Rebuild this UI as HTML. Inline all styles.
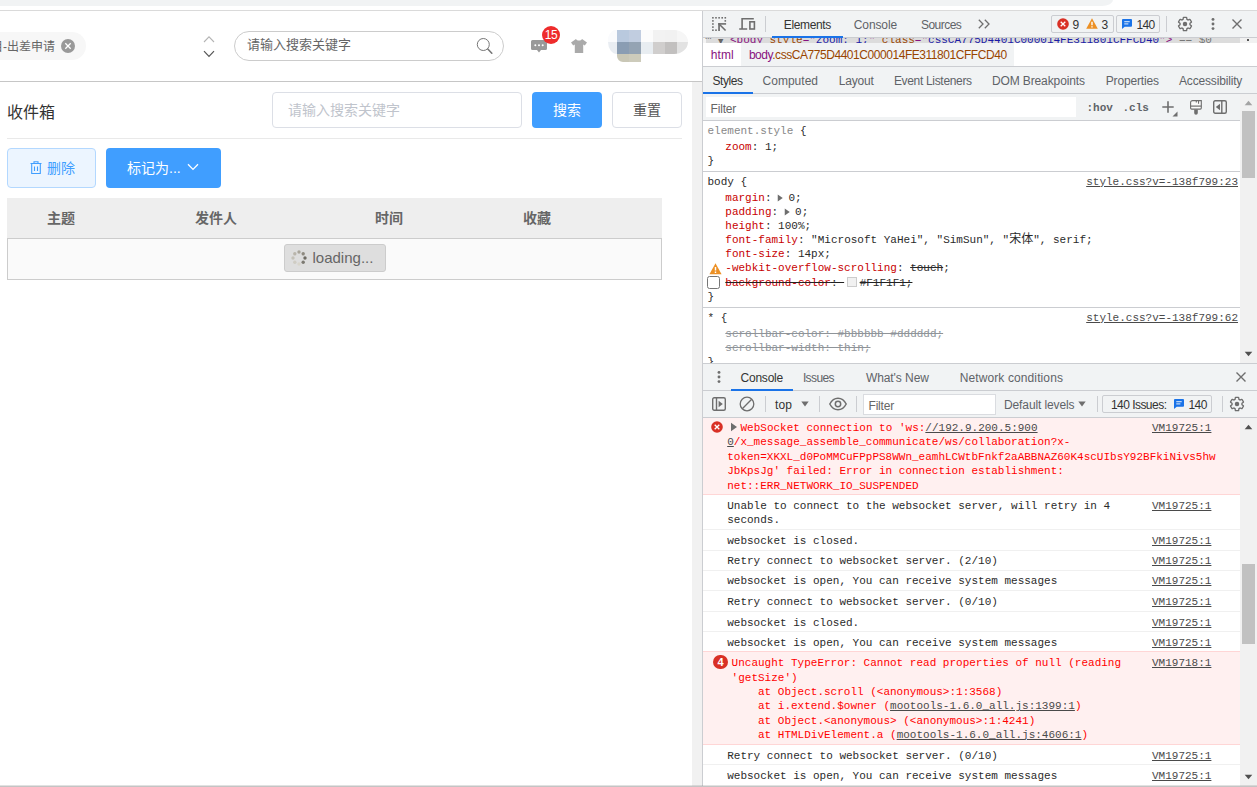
<!DOCTYPE html>
<html lang="zh-CN">
<head>
<meta charset="utf-8">
<title>收件箱</title>
<style>
*{box-sizing:border-box;margin:0;padding:0}
html,body{width:1257px;height:787px;overflow:hidden;background:#fff}
body{position:relative;font-family:"Liberation Sans","Noto Sans CJK SC",sans-serif;font-size:14px;color:#333}
.abs{position:absolute}
.t{position:absolute;white-space:nowrap;line-height:1}
svg{position:absolute;overflow:visible}
/* ---------- browser chrome sliver ---------- */
#omni{left:0;top:0;width:1113px;height:6px;background:#f1f3f4;border-bottom-right-radius:11px 6px}
#topline{left:0;top:10px;width:1257px;height:1px;background:#dadada}
/* ---------- app header ---------- */
#hdrline{left:0;top:81px;width:702px;height:1px;background:#c6c6c6}
#tag{left:-40px;top:32px;width:126px;height:28px;border-radius:14px;background:#f7f7f7}
#tagtxt{left:-9px;top:39.500px;font-size:12px;color:#666;line-height:14px}
#tagx{left:61px;top:39px;width:14px;height:14px;border-radius:7px;background:#999}
#hsearch{left:234px;top:31px;width:270px;height:30px;border:1px solid #ccc;border-radius:15px;background:#fff}
#hsearchtxt{left:247px;top:37px;font-size:13px;color:#666;line-height:16px}
#badge{left:542px;top:26px;width:18px;height:18px;border-radius:9px;background:#ee2c2c;color:#fff;font-size:12px;line-height:19px;text-align:center;letter-spacing:-0.5px}
/* ---------- app content ---------- */
#ptitle{left:7px;top:102.500px;font-size:16px;line-height:19px;color:#333}
#sinput{left:272px;top:92px;width:250px;height:36px;border:1px solid #dcdfe6;border-radius:4px;background:#fff}
#sinputtxt{left:288px;top:101px;font-size:14px;line-height:18px;color:#c0c4cc}
#bsearch{left:532px;top:92px;width:70px;height:36px;border-radius:4px;background:#409eff;color:#fff;text-align:center;line-height:37px;font-size:14px}
#breset{left:612px;top:92px;width:70px;height:36px;border-radius:4px;background:#fff;border:1px solid #dcdfe6;color:#555;text-align:center;line-height:35px;font-size:14px}
#sep{left:7px;top:138px;width:675px;height:1px;background:#e9e9e9}
#bdel{left:7px;top:148px;width:89px;height:40px;border-radius:4px;background:#ecf5ff;border:1px solid #b3d8ff}
#bdeltxt{left:47px;top:159px;font-size:14px;line-height:18px;color:#409eff}
#bmark{left:106px;top:148px;width:115px;height:40px;border-radius:4px;background:#409eff}
#bmarktxt{left:127px;top:159px;font-size:14px;line-height:18px;color:#fff}
#thead{left:7px;top:198px;width:655px;height:40px;background:#eee}
.th{position:absolute;top:208.500px;font-size:14px;line-height:18px;font-weight:bold;color:#666;white-space:nowrap}
#tbody{left:7px;top:238px;width:655px;height:42px;background:#fafafa;border:1px solid #ccc}
#loading{left:284px;top:244px;width:102px;height:28px;background:#dedede;border:1px solid #ccc;border-radius:3px}
#loadingtxt{left:312.500px;top:248.700px;font-size:15px;line-height:18px;color:#666}
#vscroll{left:692px;top:82px;width:10px;height:704px;background:#f1f1f1}
#divider{left:702px;top:11px;width:1px;height:776px;background:#cbcdd1}
#botline{left:0;top:786px;width:1257px;height:1px;background:#c4c4c4}

.u{font-family:"Liberation Sans","Noto Sans CJK SC",sans-serif;font-size:12px;line-height:12px}
.m{font-family:"Liberation Mono","Noto Sans CJK SC",monospace;font-size:11px;line-height:13px;color:#2a2a2a}
.pn{color:#c80000}
.lk{color:#4a4a4a;text-decoration:underline}
.tg{color:#881280}.an{color:#994500}.av{color:#1a1aa6}
</style>
</head>
<body>
<!-- browser chrome sliver -->
<div class="abs" id="omni"></div>
<div class="abs" id="topline"></div>

<!-- app header -->
<div class="abs" id="tag"></div>
<div class="t" id="tagtxt">目-出差申请</div>
<div class="abs" id="tagx"></div>
<svg style="left:61px;top:39px" width="14" height="14" viewBox="0 0 14 14"><path d="M4.300 4.300L9.700 9.700M9.700 4.300L4.300 9.700" stroke="#fff" stroke-width="1.300" fill="none"/></svg>
<svg style="left:203px;top:35px" width="12" height="24" viewBox="0 0 12 24"><path d="M1 7L6 1.8L11 7" stroke="#b4b4b4" stroke-width="1.1" fill="none"/><path d="M1 16.2L6 21.4L11 16.2" stroke="#555" stroke-width="1.2" fill="none"/></svg>
<div class="abs" id="hsearch"></div>
<div class="t" id="hsearchtxt">请输入搜索关键字</div>
<svg style="left:475px;top:36px" width="20" height="20" viewBox="0 0 20 20"><circle cx="8.3" cy="8.5" r="6" stroke="#777" stroke-width="1" fill="none"/><path d="M12.8 13L16.8 17.2" stroke="#777" stroke-width="1.6" stroke-linecap="round"/></svg>
<!-- message icon -->
<svg style="left:531px;top:40px" width="16" height="13" viewBox="0 0 16 13"><path d="M1.5 0h13a1.5 1.5 0 0 1 1.5 1.500v7a1.500 1.500 0 0 1-1.500 1.500h-4.500l-2 2.600-2-2.600h-4.500a1.500 1.500 0 0 1-1.500-1.500v-7a1.500 1.500 0 0 1 1.500-1.500z" fill="#999"/><circle cx="4.300" cy="5.200" r="1" fill="#fff"/><circle cx="8" cy="5.200" r="1" fill="#fff"/><circle cx="11.700" cy="5.200" r="1" fill="#fff"/></svg>
<div class="abs" id="badge">15</div>
<!-- t-shirt icon -->
<svg style="left:571px;top:39px" width="16" height="14" viewBox="0 0 16 14"><path d="M5 0c.6 1 1.700 1.600 3 1.600s2.400-.6 3-1.600l5 3.600-2.200 3-1.600-1v8.400h-8.400v-8.400l-1.600 1-2.200-3z" fill="#aaa"/></svg>
<!-- pixelated avatar / user name -->
<svg style="left:608px;top:30px" width="82" height="32" viewBox="0 0 82 32">
<defs><clipPath id="avc"><path d="M6 0h60a14 12 0 0 1 14 12a14 12 0 0 1-14 12h-33v8h-18a6 6 0 0 1-6-6v-2a9 12 0 0 1-9-12a12 12 0 0 1 6-12z"/></clipPath></defs>
<g clip-path="url(#avc)">
<rect x="0" y="0" width="9" height="12" fill="#fafbfd"/><rect x="9" y="0" width="12" height="12" fill="#b9c9de"/><rect x="21" y="0" width="12" height="12" fill="#c1cde0"/><rect x="33" y="0" width="12" height="12" fill="#fcfcfc"/><rect x="45" y="0" width="12" height="12" fill="#f2f2f2"/><rect x="57" y="0" width="12" height="12" fill="#f1f1f1"/><rect x="69" y="0" width="12" height="12" fill="#f6f6f6"/>
<rect x="0" y="12" width="9" height="12" fill="#e9edf2"/><rect x="9" y="12" width="12" height="12" fill="#8a9db3"/><rect x="21" y="12" width="12" height="12" fill="#94a3b3"/><rect x="33" y="12" width="12" height="12" fill="#e8edf1"/><rect x="45" y="12" width="12" height="12" fill="#d0cecd"/><rect x="57" y="12" width="12" height="12" fill="#c2c0bf"/><rect x="69" y="12" width="12" height="12" fill="#e2e2e2"/>
<rect x="9" y="24" width="12" height="8" fill="#c9c7b6"/><rect x="21" y="24" width="12" height="8" fill="#cdcbbb"/><rect x="33" y="24" width="12" height="8" fill="#fbfbfb"/>
</g></svg>
<div class="abs" id="hdrline"></div>

<!-- app content -->
<div class="t" id="ptitle">收件箱</div>
<div class="abs" id="sinput"></div>
<div class="t" id="sinputtxt">请输入搜索关键字</div>
<div class="abs" id="bsearch">搜索</div>
<div class="abs" id="breset">重置</div>
<div class="abs" id="sep"></div>
<div class="abs" id="bdel"></div>
<svg style="left:30px;top:161px" width="12" height="14" viewBox="0 0 12 14"><path d="M0.500 2.500h11M4 2.300v-1.500h4v1.500M1.700 2.700v9.800h8.600v-9.800M4.500 5.500v4.500M7.500 5.500v4.500" stroke="#409eff" stroke-width="1.100" fill="none"/></svg>
<div class="t" id="bdeltxt">删除</div>
<div class="abs" id="bmark"></div>
<div class="t" id="bmarktxt">标记为...</div>
<svg style="left:187px;top:163px" width="12" height="8" viewBox="0 0 12 8"><path d="M1 1.200L6 6.400L11 1.200" stroke="#fff" stroke-width="1.300" fill="none"/></svg>
<div class="abs" id="thead"></div>
<div class="th" style="left:47px">主题</div>
<div class="th" style="left:195px">发件人</div>
<div class="th" style="left:375px">时间</div>
<div class="th" style="left:523px">收藏</div>
<div class="abs" id="tbody"></div>
<div class="abs" id="loading"></div>
<svg style="left:291px;top:250px" width="16" height="16" viewBox="0 0 16 16">
<circle cx="8" cy="2" r="1.700" fill="#a9a59a"/><circle cx="12.200" cy="3.800" r="1.700" fill="#8e8a80"/><circle cx="14" cy="8" r="1.700" fill="#6f6c64"/><circle cx="12.200" cy="12.200" r="1.700" fill="#7d7a72"/><circle cx="8" cy="14" r="1.700" fill="#d8d5cb"/><circle cx="3.800" cy="12.200" r="1.700" fill="#cfccc3"/><circle cx="2" cy="8" r="1.700" fill="#c4c1b8"/><circle cx="3.800" cy="3.800" r="1.700" fill="#b9b5ab"/></svg>
<div class="t" id="loadingtxt">loading...</div>
<div class="abs" id="vscroll"></div>
<div class="abs" id="divider"></div>

<div class="abs" style="left:703px;top:11px;width:554px;height:26px;background:#f1f3f4;"></div>
<div class="abs" style="left:703px;top:37px;width:554px;height:1px;background:#cbcdd1;"></div>
<div class="abs" style="left:772px;top:36px;width:71px;height:2px;background:#1a73e8;"></div>
<div class="abs" id="domsl" style="left:703px;top:38px;width:554px;height:5px;background:#dcdcdc;overflow:hidden"><div class="abs" style="left:0;top:0;width:3px;height:5px;background:#f4f4f4"></div><div class="abs" style="left:537px;top:0;width:17px;height:5px;background:#f1f1f1"></div><div class="abs" style="left:544px;top:1px;width:2px;height:2px;background:#555"></div><div class="t m" style="left:2px;top:-8px;color:#777">…</div><div class="t m" style="left:15px;top:-8px;color:#666;font-size:9px;top:-2.5px">▼</div><div class="t m" style="left:27px;top:-4px"><span class="tg">&lt;body </span><span class="an">style</span><span class="tg">="</span><span class="av">zoom: 1;</span><span class="tg">" </span><span class="an">class</span><span class="tg">="</span><span class="av">cssCA775D4401C000014FE311801CFFCD40</span><span class="tg">"&gt;</span><span style="color:#777"> == $0</span></div></div>
<div class="abs" style="left:703px;top:43px;width:554px;height:23px;background:#fff;"></div>
<div class="abs" style="left:741px;top:43px;width:273px;height:23px;background:#f1f3f4;"></div>
<div class="abs" style="left:703px;top:66px;width:554px;height:1px;background:#cbcdd1;"></div>
<div class="abs" style="left:703px;top:67px;width:554px;height:26px;background:#f1f3f4;"></div>
<div class="abs" style="left:703px;top:93px;width:554px;height:1px;background:#cbcdd1;"></div>
<div class="abs" style="left:703px;top:92px;width:50px;height:2px;background:#1a73e8;"></div>
<div class="abs" style="left:703px;top:94px;width:537px;height:26px;background:#f1f3f4;"></div>
<div class="abs" style="left:706px;top:97px;width:370px;height:20px;background:#fff;"></div>
<div class="abs" style="left:703px;top:120px;width:537px;height:1px;background:#cbcdd1;"></div>
<div class="abs" style="left:703px;top:171px;width:537px;height:1px;background:#cbcdd1;"></div>
<div class="abs" style="left:703px;top:307px;width:537px;height:1px;background:#cbcdd1;"></div>
<div class="abs" style="left:1240px;top:94px;width:17px;height:269px;background:#f1f1f1;"></div>
<div class="abs" style="left:1242px;top:111px;width:13px;height:67px;background:#c1c1c1;"></div>
<svg style="left:1244px;top:100px" width="9" height="6" viewBox="0 0 9 6"><path d="M4.500 0.800L8.300 5.200H0.700z" fill="#a3a3a3"/></svg>
<svg style="left:1244px;top:351px" width="9" height="6" viewBox="0 0 9 6"><path d="M4.500 5.200L8.300 0.800H0.700z" fill="#505050"/></svg>
<div class="abs" style="left:703px;top:363px;width:554px;height:1px;background:#cbcdd1;"></div>
<div class="abs" style="left:703px;top:364px;width:554px;height:26px;background:#f1f3f4;"></div>
<div class="abs" style="left:703px;top:390px;width:554px;height:1px;background:#cbcdd1;"></div>
<div class="abs" style="left:731px;top:389px;width:62px;height:2px;background:#1a73e8;"></div>
<div class="abs" style="left:703px;top:391px;width:554px;height:26px;background:#f1f3f4;"></div>
<div class="abs" style="left:703px;top:417px;width:554px;height:1px;background:#cbcdd1;"></div>
<div class="abs" style="left:863px;top:394px;width:133px;height:21px;background:#fff;border:1px solid #dadce0"></div>
<div class="abs" style="left:1240px;top:418px;width:17px;height:368px;background:#f1f1f1;"></div>
<div class="abs" style="left:1242px;top:564px;width:13px;height:80px;background:#c1c1c1;"></div>
<svg style="left:1244px;top:424px" width="9" height="6" viewBox="0 0 9 6"><path d="M4.500 0.800L8.300 5.200H0.700z" fill="#505050"/></svg>
<svg style="left:1244px;top:774px" width="9" height="6" viewBox="0 0 9 6"><path d="M4.500 5.200L8.300 0.800H0.700z" fill="#505050"/></svg>
<div class="abs" style="left:703px;top:418px;width:537px;height:76px;background:#fff0f0;"></div>
<div class="abs" style="left:703px;top:494px;width:537px;height:1px;background:#ffd6d6;"></div>
<div class="abs" style="left:703px;top:529px;width:537px;height:1px;background:#f0f0f0;"></div>
<div class="abs" style="left:703px;top:550px;width:537px;height:1px;background:#f0f0f0;"></div>
<div class="abs" style="left:703px;top:570px;width:537px;height:1px;background:#f0f0f0;"></div>
<div class="abs" style="left:703px;top:590px;width:537px;height:1px;background:#f0f0f0;"></div>
<div class="abs" style="left:703px;top:611px;width:537px;height:1px;background:#f0f0f0;"></div>
<div class="abs" style="left:703px;top:631px;width:537px;height:1px;background:#f0f0f0;"></div>
<div class="abs" style="left:703px;top:652px;width:537px;height:92px;background:#fff0f0;"></div>
<div class="abs" style="left:703px;top:651px;width:537px;height:1px;background:#ffd6d6;"></div>
<div class="abs" style="left:703px;top:744px;width:537px;height:1px;background:#ffd6d6;"></div>
<div class="abs" style="left:703px;top:764px;width:537px;height:1px;background:#f0f0f0;"></div>
<div class="abs" style="left:1051px;top:15px;width:63px;height:18px;background:transparent;border:1px solid #cbcdd1;border-radius:2px"></div>
<div class="abs" style="left:1116px;top:15px;width:44px;height:18px;background:transparent;border:1px solid #cbcdd1;border-radius:2px"></div>
<div class="abs" style="left:765px;top:16px;width:1px;height:16px;background:#cbcdd1;"></div>
<div class="abs" style="left:1166px;top:16px;width:1px;height:16px;background:#cbcdd1;"></div>
<div class="abs" style="left:1102px;top:395px;width:110px;height:18px;background:transparent;border:1px solid #cbcdd1;border-radius:2px"></div>
<div class="abs" style="left:765px;top:396px;width:1px;height:16px;background:#cbcdd1;"></div>
<div class="abs" style="left:819px;top:396px;width:1px;height:16px;background:#cbcdd1;"></div>
<div class="abs" style="left:856px;top:396px;width:1px;height:16px;background:#cbcdd1;"></div>
<div class="abs" style="left:1097px;top:396px;width:1px;height:16px;background:#cbcdd1;"></div>
<div class="abs" style="left:1222px;top:396px;width:1px;height:16px;background:#cbcdd1;"></div>
<svg style="left:711px;top:16px" width="16" height="16" viewBox="0 0 16 16"><g fill="#6e6e6e"><rect x="1.1" y="1" width="1.600" height="1.600"/><rect x="4.2" y="1" width="1.600" height="1.600"/><rect x="7.3" y="1" width="1.600" height="1.600"/><rect x="10.4" y="1" width="1.600" height="1.600"/><rect x="13.5" y="1" width="1.600" height="1.600"/><rect x="1.100" y="4.1" width="1.600" height="1.600"/><rect x="1.100" y="7.2" width="1.600" height="1.600"/><rect x="1.100" y="10.3" width="1.600" height="1.600"/><rect x="1.100" y="13.4" width="1.600" height="1.600"/><rect x="13.500" y="4.100" width="1.600" height="1.600"/><rect x="4.200" y="13.400" width="1.600" height="1.600"/><rect x="7.200" y="7.100" width="7.900" height="1.600"/><rect x="7.200" y="7.100" width="1.700" height="7.900"/></g><path d="M8.300 8.200L14.600 14.500" stroke="#6e6e6e" stroke-width="1.600" fill="none"/></svg>
<svg style="left:739px;top:17px" width="17" height="14" viewBox="0 0 17 14"><path d="M3.100 11.500v-9.800h11.700M0.200 12h8" stroke="#6e6e6e" stroke-width="1.600" fill="none"/><rect x="10.900" y="4.800" width="4.500" height="7.200" stroke="#6e6e6e" stroke-width="1.600" fill="none"/></svg>
<svg style="left:978px;top:19px" width="13" height="10" viewBox="0 0 13 10"><path d="M0.800 0.800L5 5L0.800 9.200M6.800 0.800L11 5L6.800 9.200" stroke="#6e6e6e" stroke-width="1.300" fill="none"/></svg>
<svg style="left:1057px;top:18px" width="12" height="12" viewBox="0 0 12 12"><circle cx="6" cy="6" r="5.8" fill="#d93025"/><path d="M3.700 3.700L8.300 8.300M8.300 3.700L3.700 8.300" stroke="#fff" stroke-width="1.300" fill="none"/></svg>
<svg style="left:1086px;top:17.5px" width="12" height="11" viewBox="0 0 12 11"><path d="M6 0.300L11.800 10.700H0.200z" fill="#ec9024"/><path d="M6 3.800v3.400M6 8.200v1.400" stroke="#fff" stroke-width="1.400"/></svg>
<svg style="left:1121.5px;top:19px" width="10" height="10" viewBox="0 0 11 11"><path d="M1 0h9a1 1 0 0 1 1 1v6.500a1 1 0 0 1-1 1h-7l-3 2.500v-10a1 1 0 0 1 1-1z" fill="#1a73e8"/><path d="M2.500 3h6M2.500 5.400h4.500" stroke="#fff" stroke-width="1"/></svg>
<svg style="left:1173.5px;top:399px" width="10" height="10" viewBox="0 0 11 11"><path d="M1 0h9a1 1 0 0 1 1 1v6.500a1 1 0 0 1-1 1h-7l-3 2.500v-10a1 1 0 0 1 1-1z" fill="#1a73e8"/><path d="M2.500 3h6M2.500 5.400h4.500" stroke="#fff" stroke-width="1"/></svg>
<svg style="left:1177px;top:16px" width="16" height="16" viewBox="0 0 24 24"><path d="M19.430 12.980c.040-.320.070-.640.070-.980s-.030-.660-.070-.980l2.110-1.650a.5.500 0 0 0 .12-.640l-2-3.460a.5.500 0 0 0-.61-.220l-2.490 1a7.300 7.300 0 0 0-1.690-.980l-.38-2.650a.49.490 0 0 0-.49-.420h-4a.49.490 0 0 0-.49.420l-.38 2.650c-.61.250-1.170.590-1.690.980l-2.490-1a.5.500 0 0 0-.61.220l-2 3.460a.5.500 0 0 0 .12.640l2.110 1.650c-.040.320-.070.650-.070.980s.030.660.070.980l-2.110 1.650a.5.500 0 0 0-.12.640l2 3.460c.12.220.39.300.61.220l2.490-1c.52.400 1.080.730 1.690.980l.38 2.650c.030.240.240.420.490.420h4c.25 0 .46-.18.490-.420l.38-2.650a7.700 7.700 0 0 0 1.690-.980l2.490 1c.23.090.49 0 .61-.220l2-3.460a.5.500 0 0 0-.12-.640z" fill="none" stroke="#6e6e6e" stroke-width="2"/><circle cx="12" cy="12" r="3.400" fill="#6e6e6e"/></svg>
<svg style="left:1228.5px;top:396px" width="16" height="16" viewBox="0 0 24 24"><path d="M19.430 12.980c.040-.320.070-.640.070-.980s-.030-.660-.070-.980l2.110-1.650a.5.500 0 0 0 .12-.640l-2-3.460a.5.500 0 0 0-.61-.220l-2.490 1a7.300 7.300 0 0 0-1.690-.980l-.38-2.650a.49.490 0 0 0-.49-.420h-4a.49.490 0 0 0-.49.420l-.38 2.650c-.61.250-1.170.590-1.690.980l-2.490-1a.5.500 0 0 0-.61.220l-2 3.460a.5.500 0 0 0 .12.640l2.110 1.650c-.040.320-.070.650-.070.980s.030.660.070.980l-2.110 1.650a.5.500 0 0 0-.12.640l2 3.460c.12.220.39.300.61.220l2.490-1c.52.400 1.080.730 1.690.980l.38 2.650c.030.240.240.420.490.420h4c.25 0 .46-.18.490-.420l.38-2.650a7.700 7.700 0 0 0 1.690-.980l2.490 1c.23.090.49 0 .61-.220l2-3.460a.5.500 0 0 0-.12-.640z" fill="none" stroke="#6e6e6e" stroke-width="2"/><circle cx="12" cy="12" r="3.400" fill="#6e6e6e"/></svg>
<svg style="left:1211px;top:17px" width="4" height="14" viewBox="0 0 4 14"><circle cx="2" cy="2.400" r="1.450" fill="#6e6e6e"/><circle cx="2" cy="7" r="1.450" fill="#6e6e6e"/><circle cx="2" cy="11.600" r="1.450" fill="#6e6e6e"/></svg>
<svg style="left:717px;top:370px" width="4" height="14" viewBox="0 0 4 14"><circle cx="2" cy="2.400" r="1.450" fill="#6e6e6e"/><circle cx="2" cy="7" r="1.450" fill="#6e6e6e"/><circle cx="2" cy="11.600" r="1.450" fill="#6e6e6e"/></svg>
<svg style="left:1232px;top:19px" width="10" height="10" viewBox="0 0 10 10"><path d="M0.500 0.500L9.500 9.500M9.500 0.500L0.500 9.500" stroke="#6e6e6e" stroke-width="1.400" fill="none"/></svg>
<svg style="left:1236px;top:372px" width="10" height="10" viewBox="0 0 10 10"><path d="M0.500 0.500L9.500 9.500M9.500 0.500L0.500 9.500" stroke="#6e6e6e" stroke-width="1.400" fill="none"/></svg>
<svg style="left:1162px;top:101px" width="16" height="16" viewBox="0 0 16 16"><path d="M0.300 6h11.400M6 0.300v11.400" stroke="#6e6e6e" stroke-width="1.600" fill="none"/><path d="M15.500 10.500v5h-5z" fill="#6e6e6e"/></svg>
<svg style="left:1190px;top:100px" width="12" height="15" viewBox="0 0 12 15"><path d="M2.600 0.600h8.700v7.500a1 1 0 0 1-1 1h-8.700a1 1 0 0 1-1-1v-5.500a2 2 0 0 1 2-2z" fill="#fafafa" stroke="#6e6e6e" stroke-width="1.100"/><path d="M0.600 6.100h10.700" stroke="#6e6e6e" stroke-width="1.200"/><path d="M8.550 0.600v3.200" stroke="#6e6e6e" stroke-width="1.100"/><path d="M6.300 0.600v2" stroke="#6e6e6e" stroke-width="1.100"/><path d="M4.200 9.500h3.600v3.400a1.800 1.800 0 0 1-3.600 0z" fill="#6e6e6e"/></svg>
<svg style="left:1213px;top:100px" width="14" height="14" viewBox="0 0 14 14"><rect x="0.700" y="0.700" width="12.600" height="12.600" rx="1.500" stroke="#6e6e6e" stroke-width="1.400" fill="none"/><path d="M8.800 0.700v12.600" stroke="#6e6e6e" stroke-width="1.400"/><path d="M7 3.800v6.400l-4.200-3.200z" fill="#6e6e6e"/></svg>
<svg style="left:712px;top:397px" width="14" height="14" viewBox="0 0 14 14"><rect x="0.700" y="0.700" width="12.600" height="12.600" rx="1.500" stroke="#6e6e6e" stroke-width="1.400" fill="none"/><path d="M4.500 0.700v12.600" stroke="#6e6e6e" stroke-width="1.400"/><path d="M6.600 3.800v6.400l4.200-3.200z" fill="#6e6e6e"/></svg>
<svg style="left:739px;top:396px" width="16" height="16" viewBox="0 0 16 16"><circle cx="8" cy="8" r="6.800" stroke="#6e6e6e" stroke-width="1.300" fill="none"/><path d="M3.300 12.700L12.700 3.300" stroke="#6e6e6e" stroke-width="1.300"/></svg>
<svg style="left:801px;top:400.5px" width="8" height="6" viewBox="0 0 8 6"><path d="M0.300 0.500h7.400L4 5.500z" fill="#6e6e6e"/></svg>
<svg style="left:1078px;top:400.5px" width="8" height="6" viewBox="0 0 8 6"><path d="M0.300 0.500h7.400L4 5.500z" fill="#6e6e6e"/></svg>
<svg style="left:829px;top:397px" width="18" height="14" viewBox="0 0 18 14"><path d="M0.800 7C3 2.800 6 1.200 9 1.200S15 2.800 17.200 7C15 11.200 12 12.800 9 12.800S3 11.200 0.800 7z" stroke="#6e6e6e" stroke-width="1.500" fill="none"/><circle cx="9" cy="7" r="2.700" stroke="#6e6e6e" stroke-width="1.500" fill="none"/></svg>
<svg style="left:711px;top:420.5px" width="12" height="12" viewBox="0 0 12 12"><circle cx="6" cy="6" r="5.8" fill="#d93025"/><path d="M3.700 3.700L8.300 8.300M8.300 3.700L3.700 8.300" stroke="#fff" stroke-width="1.300" fill="none"/></svg>
<svg style="left:730px;top:422px" width="8" height="10" viewBox="0 0 8 10"><path d="M1 0.800v8.400L7 5z" fill="#6e6e6e"/></svg>
<div class="abs" style="left:713px;top:655px;width:15px;height:14px;border-radius:7px;background:#d93025"></div>
<div class="t" style="left:713px;top:656px;width:15px;text-align:center;font-size:11px;font-weight:bold;color:#fff;line-height:12px">4</div>
<div class="t u" style="left:783.8px;top:18.6px;color:#333;letter-spacing:-0.37px">Elements</div>
<div class="t u" style="left:853.8px;top:18.6px;color:#5f6368;letter-spacing:-0.12px">Console</div>
<div class="t u" style="left:921.0px;top:18.6px;color:#5f6368;letter-spacing:-0.53px">Sources</div>
<div class="t u" style="left:1072.5px;top:19.1px;color:#333;letter-spacing:-0.19px">9</div>
<div class="t u" style="left:1101.5px;top:19.1px;color:#333;letter-spacing:-0.19px">3</div>
<div class="t u" style="left:1136.4px;top:19.1px;color:#333;letter-spacing:-0.68px">140</div>
<div class="t u" style="left:710.7px;top:48.5px;color:#881280;letter-spacing:0.11px">html</div>
<div class="t u" style="left:712.5px;top:74.8px;color:#333;letter-spacing:-0.46px">Styles</div>
<div class="t u" style="left:762.5px;top:74.8px;color:#5f6368;letter-spacing:0.02px">Computed</div>
<div class="t u" style="left:838.7px;top:74.8px;color:#5f6368;letter-spacing:-0.16px">Layout</div>
<div class="t u" style="left:893.9px;top:74.8px;color:#5f6368;letter-spacing:-0.32px">Event Listeners</div>
<div class="t u" style="left:991.9px;top:74.8px;color:#5f6368;letter-spacing:-0.11px">DOM Breakpoints</div>
<div class="t u" style="left:1105.7px;top:74.8px;color:#5f6368;letter-spacing:-0.14px">Properties</div>
<div class="t u" style="left:1179.0px;top:74.8px;color:#5f6368;letter-spacing:-0.17px">Accessibility</div>
<div class="t u" style="left:710.6px;top:102.5px;color:#666;letter-spacing:-0.21px">Filter</div>
<div class="t u" style="left:740.5px;top:371.5px;color:#333;letter-spacing:-0.22px">Console</div>
<div class="t u" style="left:802.9px;top:371.5px;color:#5f6368;letter-spacing:-0.60px">Issues</div>
<div class="t u" style="left:865.9px;top:371.5px;color:#5f6368;letter-spacing:-0.07px">What&#x27;s New</div>
<div class="t u" style="left:959.7px;top:371.5px;color:#5f6368;letter-spacing:0.11px">Network conditions</div>
<div class="t u" style="left:775.0px;top:399.0px;color:#333;letter-spacing:0.10px">top</div>
<div class="t u" style="left:868.5px;top:399.6px;color:#666;letter-spacing:-0.20px">Filter</div>
<div class="t u" style="left:1004.0px;top:399.2px;color:#5f6368;letter-spacing:-0.11px">Default levels</div>
<div class="t u" style="left:1110.9px;top:399.2px;color:#333;letter-spacing:-0.53px">140 Issues:</div>
<div class="t u" style="left:1188.5px;top:399.2px;color:#333;letter-spacing:-0.58px">140</div>
<div class="t u" style="left:748.900px;top:48.5px;letter-spacing:-0.45px"><span style="color:#881280">body</span><span style="color:#994500">.cssCA775D4401C000014FE311801CFFCD40</span></div>
<div class="t m" style="left:1086.500px;top:101.700px;color:#5f6368;font-weight:bold">:hov</div>
<div class="t m" style="left:1122.500px;top:101.700px;color:#5f6368;font-weight:bold">.cls</div>
<div class="t m" style="left:707.5px;top:125.2px;"><span style="color:#888">element.style</span> {</div>
<div class="t m" style="left:725.3px;top:140.7px;"><span class="pn">zoom</span>: 1;</div>
<div class="t m" style="left:707.5px;top:155.2px;">}</div>
<div class="t m" style="left:707.5px;top:175.9px;">body {</div>
<div class="t m" style="left:1086.2px;top:175.9px;"><span class="lk">style.css?v=-138f799:23</span></div>
<div class="t m" style="left:725.3px;top:191.8px;"><span class="pn">margin</span>: <svg style="position:relative;display:inline-block;vertical-align:-1px;margin:0 4.500px 0 -0.700px" width="6.500" height="8" viewBox="0 0 6 8"><path d="M0.500 0.500v7L5.500 4z" fill="#6e6e6e"/></svg>0;</div>
<div class="t m" style="left:725.3px;top:205.9px;"><span class="pn">padding</span>: <svg style="position:relative;display:inline-block;vertical-align:-1px;margin:0 4.500px 0 -0.700px" width="6.500" height="8" viewBox="0 0 6 8"><path d="M0.500 0.500v7L5.500 4z" fill="#6e6e6e"/></svg>0;</div>
<div class="t m" style="left:725.3px;top:220.0px;"><span class="pn">height</span>: 100%;</div>
<div class="t m" style="left:725.3px;top:234.1px;"><span class="pn">font-family</span>: "Microsoft YaHei", "SimSun", "<span style="font-size:12px;line-height:10px">宋体</span>", serif;</div>
<div class="t m" style="left:725.3px;top:248.2px;"><span class="pn">font-size</span>: 14px;</div>
<div class="t m" style="left:725.3px;top:262.4px;"><span class="pn">-webkit-overflow-scrolling</span>: <span style="text-decoration:line-through">touch</span>;</div>
<svg style="left:709.3px;top:262.6px" width="13" height="11.5" viewBox="0 0 12 11"><path d="M6 0.300L11.800 10.700H0.200z" fill="#ec9024"/><path d="M6 3.800v3.400M6 8.200v1.400" stroke="#fff" stroke-width="1.400"/></svg>
<div class="abs" style="left:707px;top:276px;width:13px;height:13px;background:#fff;border:1px solid #767676;border-radius:2.500px"></div>
<div class="t m" style="left:725.3px;top:276.6px;"><span style="text-decoration:line-through;text-decoration-color:#222"><span class="pn">background-color</span>: <span style="display:inline-block;width:10px;height:10px;background:#f1f1f1;border:1px solid #ccc;vertical-align:-1px;margin:0 3px 0 2.500px"></span>#F1F1F1;</span></div>
<div class="t m" style="left:707.5px;top:290.8px;">}</div>
<div class="t m" style="left:707.5px;top:311.7px;">* {</div>
<div class="t m" style="left:1086.2px;top:311.7px;"><span class="lk">style.css?v=-138f799:62</span></div>
<div class="t m" style="left:725.3px;top:327.7px;"><span style="text-decoration:line-through;color:#8f9499">scrollbar-color: #bbbbbb #dddddd;</span></div>
<div class="t m" style="left:725.3px;top:341.8px;"><span style="text-decoration:line-through;color:#8f9499">scrollbar-width: thin;</span></div>
<div class="abs" style="left:703px;top:354px;width:537px;height:9px;overflow:hidden"><div class="t m" style="left:4.500px;top:1.900px">}</div></div>
<div class="t m" style="left:740.5px;top:422.0px;color:#ff0000">WebSocket connection to 'ws:<span class="lk">//192.9.200.5:900</span></div>
<div class="t m" style="left:727.2px;top:436.4px;color:#ff0000"><span class="lk">0</span>/x_message_assemble_communicate/ws/collaboration?x-</div>
<div class="t m" style="left:727.2px;top:450.8px;color:#ff0000">token=XKXL_d0PoMMCuFPpPS8WWn_eamhLCWtbFnkf2aABBNAZ60K4scUIbsY92BFkiNivs5hw</div>
<div class="t m" style="left:727.2px;top:465.2px;color:#ff0000">JbKpsJg' failed: Error in connection establishment:</div>
<div class="t m" style="left:727.2px;top:479.6px;color:#ff0000">net::ERR_NETWORK_IO_SUSPENDED</div>
<div class="t m" style="left:1152px;top:422.0px;"><span class="lk">VM19725:1</span></div>
<div class="t m" style="left:727.2px;top:499.8px;">Unable to connect to the websocket server, will retry in 4</div>
<div class="t m" style="left:1152px;top:499.8px;"><span class="lk">VM19725:1</span></div>
<div class="t m" style="left:727.2px;top:514.0px;">seconds.</div>
<div class="t m" style="left:727.2px;top:534.8px;">websocket is closed.</div>
<div class="t m" style="left:1152px;top:534.8px;"><span class="lk">VM19725:1</span></div>
<div class="t m" style="left:727.2px;top:555.0px;">Retry connect to websocket server. (2/10)</div>
<div class="t m" style="left:1152px;top:555.0px;"><span class="lk">VM19725:1</span></div>
<div class="t m" style="left:727.2px;top:575.4px;">websocket is open, You can receive system messages</div>
<div class="t m" style="left:1152px;top:575.4px;"><span class="lk">VM19725:1</span></div>
<div class="t m" style="left:727.2px;top:595.8px;">Retry connect to websocket server. (0/10)</div>
<div class="t m" style="left:1152px;top:595.8px;"><span class="lk">VM19725:1</span></div>
<div class="t m" style="left:727.2px;top:616.9px;">websocket is closed.</div>
<div class="t m" style="left:1152px;top:616.9px;"><span class="lk">VM19725:1</span></div>
<div class="t m" style="left:727.2px;top:636.8px;">websocket is open, You can receive system messages</div>
<div class="t m" style="left:1152px;top:636.8px;"><span class="lk">VM19725:1</span></div>
<div class="t m" style="left:727.2px;top:750.0px;">Retry connect to websocket server. (0/10)</div>
<div class="t m" style="left:1152px;top:750.0px;"><span class="lk">VM19725:1</span></div>
<div class="t m" style="left:727.2px;top:769.8px;">websocket is open, You can receive system messages</div>
<div class="t m" style="left:1152px;top:769.8px;"><span class="lk">VM19725:1</span></div>
<div class="t m" style="left:731.6px;top:656.7px;color:#ff0000">Uncaught TypeError: Cannot read properties of null (reading</div>
<div class="t m" style="left:1152px;top:656.7px;"><span class="lk">VM19718:1</span></div>
<div class="t m" style="left:731.6px;top:671.6px;color:#ff0000">'getSize')</div>
<div class="t m" style="left:731.6px;top:686.0px;color:#ff0000;white-space:pre">    at Object.scroll (&lt;anonymous&gt;:1:3568)</div>
<div class="t m" style="left:731.6px;top:700.4px;color:#ff0000;white-space:pre">    at i.extend.$owner (<span class="lk">mootools-1.6.0_all.js:1399:1</span>)</div>
<div class="t m" style="left:731.6px;top:714.7px;color:#ff0000;white-space:pre">    at Object.&lt;anonymous&gt; (&lt;anonymous&gt;:1:4241)</div>
<div class="t m" style="left:731.6px;top:728.7px;color:#ff0000;white-space:pre">    at HTMLDivElement.a (<span class="lk">mootools-1.6.0_all.js:4606:1</span>)</div>

<div class="abs" style="left:0;top:785px;width:1257px;height:1px;background:rgba(120,120,120,0.22)"></div>
<div class="abs" id="botline"></div>
</body>
</html>
